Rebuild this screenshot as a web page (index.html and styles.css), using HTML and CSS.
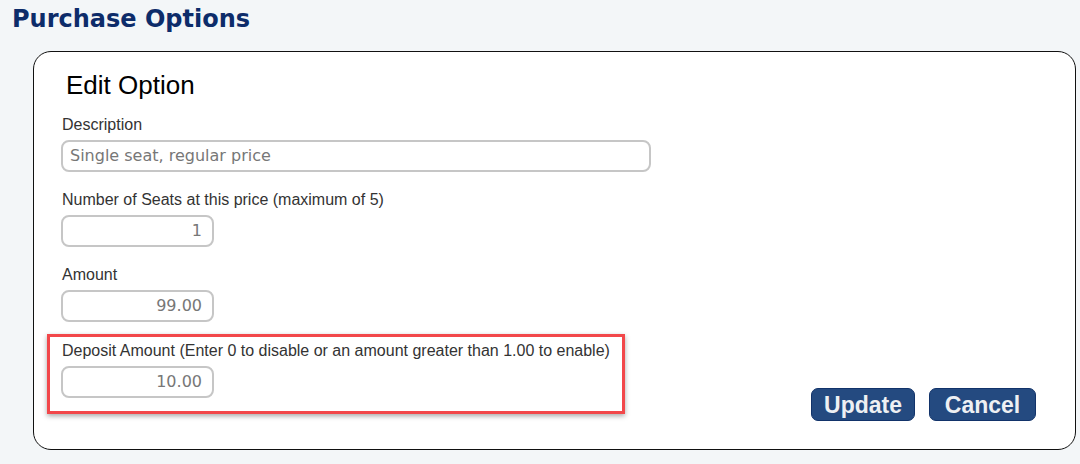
FILE: index.html
```html
<!DOCTYPE html>
<html>
<head>
<meta charset="utf-8">
<link rel="stylesheet" href="styles.css">
</head>
<body>
<h1 class="page-title">Purchase Options</h1>
<div class="card">
  <div class="form">
    <h2 class="card-title">Edit Option</h2>
    <div class="field">
      <label class="label">Description</label>
      <div class="input wide">Single seat, regular price</div>
    </div>
    <div class="field">
      <label class="label">Number of Seats at this price (maximum of 5)</label>
      <div class="input num">1</div>
    </div>
    <div class="field">
      <label class="label">Amount</label>
      <div class="input num">99.00</div>
    </div>
    <div class="highlight">
      <label class="label">Deposit Amount (Enter 0 to disable or an amount greater than 1.00 to enable)</label>
      <div class="input num">10.00</div>
    </div>
  </div>
  <div class="actions">
    <button class="btn btn-update">Update</button>
    <button class="btn btn-cancel">Cancel</button>
  </div>
</div>
</body>
</html>
```
FILE: styles.css
```css
html, body {
  margin: 0;
  padding: 0;
  background: #f3f6f8;
}
body {
  width: 1080px;
  height: 464px;
  overflow: hidden;
}
.page-title {
  margin: 0;
  padding: 5px 0 0 12px;
  height: 46px;
  box-sizing: border-box;
  font-family: "DejaVu Sans", Verdana, sans-serif;
  font-weight: bold;
  font-size: 24px;
  line-height: 28px;
  color: #0d2c6a;
}
.card {
  margin: 5px 4px 0 33px;
  height: 399px;
  box-sizing: border-box;
  background: #fff;
  border: 1px solid #111;
  border-radius: 18px;
  padding: 0 39px 28px 27px;
  display: flex;
  justify-content: space-between;
}
.form {
  display: flex;
  flex-direction: column;
}
.card-title {
  margin: 16px 0 13px 5px;
  font-family: "Liberation Sans", Arial, sans-serif;
  font-weight: normal;
  font-size: 26px;
  line-height: 34px;
  color: #000;
}
.field {
  display: flex;
  flex-direction: column;
  margin-bottom: 18px;
}
.label {
  font-family: "Liberation Sans", Arial, sans-serif;
  font-size: 16px;
  line-height: 19px;
  color: #333;
  margin: 0 0 6px 1px;
}
.input {
  box-sizing: border-box;
  height: 32px;
  border: 2px solid #c6c6c6;
  border-radius: 8px;
  background: #fff;
  font-family: "DejaVu Sans", Tahoma, sans-serif;
  font-size: 16px;
  line-height: 28px;
  color: #777;
  padding: 0 10px 0 7px;
}
.input.wide { width: 590px; }
.input.num { width: 153px; text-align: right; }
.highlight {
  display: flex;
  flex-direction: column;
  align-items: flex-start;
  width: 578px;
  box-sizing: border-box;
  margin: -6px 0 0 -14px;
  padding: 4px 11px 13px 11px;
  border: 3px solid #f2474a;
  box-shadow: 0 2px 5px rgba(0,0,0,0.35);
}
.actions {
  align-self: flex-end;
  display: flex;
  gap: 14px;
}
.btn {
  box-sizing: border-box;
  height: 33px;
  padding: 0;
  background: #244a80;
  border: 1px solid #12336a;
  border-radius: 7px;
  color: #eef0f3;
  font-family: "Liberation Sans", Arial, sans-serif;
  font-weight: bold;
  font-size: 23px;
  line-height: 30px;
  text-align: center;
  cursor: pointer;
}
.btn-update { width: 104px; }
.btn-cancel { width: 107px; }
```
